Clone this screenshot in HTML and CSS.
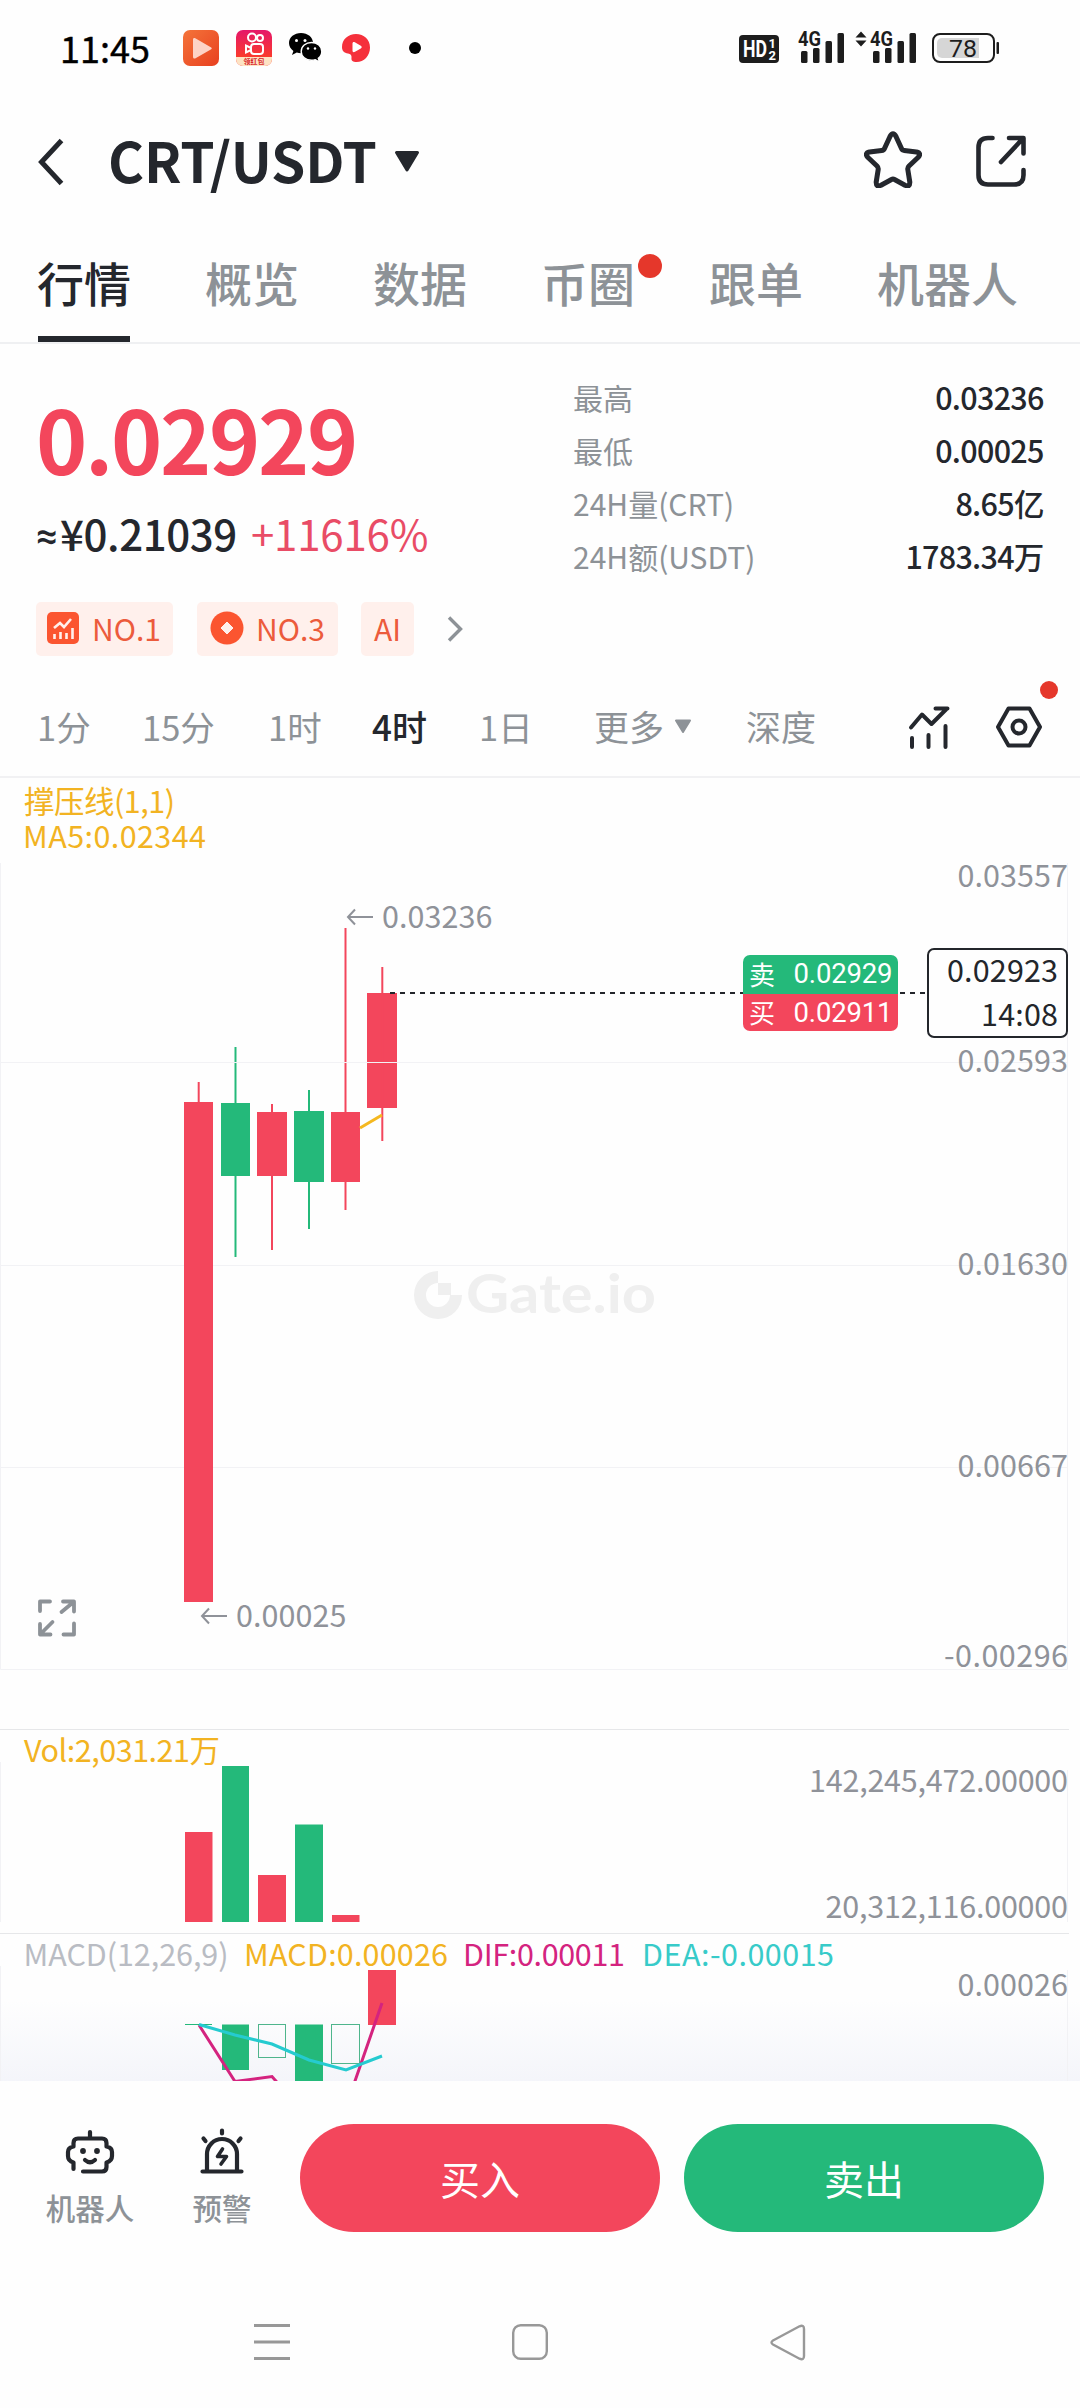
FILE: index.html
```html
<!DOCTYPE html>
<html lang="zh-CN">
<head>
<meta charset="utf-8">
<title>CRT/USDT</title>
<link rel="stylesheet" href="styles.css">
</head>
<body>
<div class="screen">

  <div class="status">
    <span class="clock">11:45</span>
    <div class="notices">
      <svg width="36" height="36" viewBox="0 0 36 36">
        <defs><linearGradient id="gPlay" x1="0" y1="0" x2="1" y2="1"><stop offset="0" stop-color="#f4743a"/><stop offset="1" stop-color="#e8401f"/></linearGradient></defs>
        <rect width="36" height="36" rx="7" fill="url(#gPlay)"/>
        <path d="M10 9.500c0-1.500 1-2 2.300-1.300l15.500 9c1.300.8 1.300 1.500 0 2.200L13 28c-1.800 1-3 .6-3-1.500z" fill="#fdd3c6"/>
      </svg>
      <svg width="36" height="36" viewBox="0 0 36 36">
        <defs><linearGradient id="gCam" x1="0" y1="0" x2="0" y2="1"><stop offset="0" stop-color="#e5176a"/><stop offset=".75" stop-color="#fa3a2c"/></linearGradient></defs>
        <rect width="36" height="36" rx="7" fill="url(#gCam)"/>
        <g fill="none" stroke="#fff" stroke-width="2"><circle cx="16" cy="7.500" r="4"/><circle cx="24" cy="8" r="3"/><rect x="15" y="14" width="12" height="10" rx="3"/><path d="M15 18l-5-2.500v7l5-2.500"/></g>
        <path d="M0 27h36v2a7 7 0 0 1-7 7H7a7 7 0 0 1-7-7z" fill="#fde3c4"/>
        <text class="tiny-label" x="18" y="34" text-anchor="middle">领红包</text>
      </svg>
      <svg width="34" height="30" viewBox="0 0 34 30">
        <path d="M12 0C5.300 0 0 4.300 0 10c0 3.200 1.700 6 4.400 7.900L3 22l4.800-2.400c1.400.4 2.800.6 4.200.6C18.700 20.200 24 15.700 24 10S18.700 0 12 0z" fill="#000"/>
        <path d="M22.500 9.500c-5.800 0-10.300 3.900-10.300 8.900s4.500 8.900 10.300 8.900c1.300 0 2.600-.2 3.800-.6L30.500 29l-1.200-3.800c2.200-1.600 3.500-4 3.500-6.800 0-5-4.500-8.900-10.300-8.900z" fill="#000" stroke="#fff" stroke-width="1.400"/>
        <g fill="#fff"><circle cx="7.500" cy="7.500" r="1.500"/><circle cx="16" cy="7.500" r="1.500"/><circle cx="19" cy="15.500" r="1.200"/><circle cx="26" cy="15.500" r="1.200"/></g>
      </svg>
      <svg class="notice-red" width="30" height="30" viewBox="0 0 30 30">
        <path d="M15 1c8 0 14 5.500 14 13.500C29 23 23 29 15.500 29 12 29 10 28 10.500 24.500c.3-2.500-1-3.500-3.500-4C3 19.800 1 18 1 14 1 6.500 7 1 15 1z" fill="#f5303b"/>
        <path d="M11.500 10.500c0-1.500 1-2 2.300-1.300l6 3.600c1.300.8 1.300 1.900 0 2.600l-5.800 3.400c-1.500.8-2.500.3-2.500-1.300z" fill="#fff"/>
      </svg>
      <svg class="notice-dot" width="12" height="12"><circle cx="6" cy="6" r="6"/></svg>
    </div>
    <svg class="signals" width="262" height="48" viewBox="738 24 262 48">
      <rect x="739" y="35" width="40" height="28" rx="4" fill="#1d1d1d"/>
      <text class="hd" x="743" y="57" textLength="24" lengthAdjust="spacingAndGlyphs">HD</text>
      <text class="hd-num" x="768.500" y="48">1</text><text class="hd-num" x="768.500" y="60">2</text>
      <g fill="#1d1d1d">
        <text class="net" x="798" y="46" textLength="23" lengthAdjust="spacingAndGlyphs">4G</text>
        <rect x="801" y="51" width="6.500" height="12" rx="1.500"/><rect x="813" y="48" width="6.500" height="15" rx="1.500"/><rect x="825.500" y="41" width="6.500" height="22" rx="1.500"/><rect x="837.500" y="33" width="6.500" height="30" rx="1.500"/>
        <path d="M861 31.500l5.500 6h-11zM861 46.500l5.500-6h-11z"/>
        <text class="net" x="870" y="46" textLength="23" lengthAdjust="spacingAndGlyphs">4G</text>
        <rect x="873" y="51" width="6.500" height="12" rx="1.500"/><rect x="885" y="48" width="6.500" height="15" rx="1.500"/><rect x="897.500" y="41" width="6.500" height="22" rx="1.500"/><rect x="909.500" y="33" width="6.500" height="30" rx="1.500"/>
        <rect x="996.500" y="42" width="2.500" height="12" rx="1"/>
      </g>
      <rect x="933" y="34" width="61" height="28" rx="7" fill="none" stroke="#1d1d1d" stroke-width="2"/>
      <path d="M942 38h37v20h-37a5 5 0 0 1-5-5V43a5 5 0 0 1 5-5z" fill="#d6d6d6"/>
      <text class="batt" x="949" y="57" textLength="28" lengthAdjust="spacingAndGlyphs">78</text>
    </svg>
  </div>

  <header class="header">
    <svg class="back" width="28" height="48" viewBox="0 0 28 48"><path d="M24.500 2.500L4.500 24l20 21.500" fill="none" stroke="#24272d" stroke-width="5"/></svg>
    <h1 class="pair">CRT/USDT</h1>
    <svg class="caret" width="26" height="22" viewBox="0 0 26 22"><path d="M2.500 1.500h21L13 19z" fill="#24272d" stroke="#24272d" stroke-width="3" stroke-linejoin="round"/></svg>
    <svg class="star" width="58" height="58" viewBox="0 0 58 58"><path d="M26 6.500q3-5.500 6 0l5.500 12q.8 1.800 2.800 2l12.200 1.500q5.500 1.200 1.500 5.500l-9 8.500q-1.500 1.500-1.200 3.500l2 12.500q.2 5.500-4.800 3.200L30.500 49.500q-1.500-.8-3 0L17 55.200q-5 2.300-4.800-3.200l2-12.500q.3-2-1.200-3.500l-9-8.500Q0 23.200 5.500 22l12.200-1.500q2-.2 2.800-2z" fill="none" stroke="#24272d" stroke-width="5" stroke-linejoin="round"/></svg>
    <svg class="share" width="52" height="54" viewBox="0 0 52 54"><g fill="none" stroke="#24272d" stroke-width="4.600" stroke-linecap="round" stroke-linejoin="round"><path d="M17.500 4H13Q3.500 4 3.500 13.500V41Q3.500 50.500 13 50.500H39Q48.500 50.500 48.500 41V36"/><path d="M34 4H48.500V19.500M48 4.500L26 28"/></g></svg>
  </header>

  <nav class="tabs">
    <span class="tab tab-on">行情</span>
    <span class="tab">概览</span>
    <span class="tab">数据</span>
    <span class="tab">币圈<i class="dot"></i></span>
    <span class="tab">跟单</span>
    <span class="tab">机器人</span>
  </nav>

  <section class="quote">
    <div class="price-col">
      <div class="price">0.02929</div>
      <div class="sub"><span class="approx">≈</span><span class="cny">¥0.21039</span><span class="change">+11616%</span></div>
      <div class="tags">
        <span class="tag tag-a"><svg width="32" height="32" viewBox="0 0 32 32"><rect width="32" height="32" rx="5" fill="#fb5530"/><path d="M7 16l6-5 4 4 7-8M7.500 27v-5M13.500 27v-7M19.500 27v-6M25.500 27V16" fill="none" stroke="#fff0ec" stroke-width="2.600"/></svg>NO.1</span>
        <span class="tag tag-b"><svg width="34" height="34" viewBox="0 0 34 34"><circle cx="17" cy="17" r="16.500" fill="#fb5530"/><path d="M17 11l6 6-6 6-6-6z" fill="#fff0ec" stroke="#fff0ec" stroke-linejoin="round"/></svg>NO.3</span>
        <span class="tag tag-c">AI</span>
        <svg class="more-tags" width="16" height="26" viewBox="0 0 16 26"><path d="M2 1.500L13.500 13 2 24.500" fill="none" stroke="#8d9297" stroke-width="3.400"/></svg>
      </div>
    </div>
    <dl class="stats">
      <div><dt>最高</dt><dd>0.03236</dd></div>
      <div><dt>最低</dt><dd>0.00025</dd></div>
      <div><dt>24H量(CRT)</dt><dd>8.65亿</dd></div>
      <div><dt>24H额(USDT)</dt><dd>1783.34万</dd></div>
    </dl>
  </section>

  <div class="intervals">
    <span class="iv iv-1">1分</span>
    <span class="iv iv-2">15分</span>
    <span class="iv iv-3">1时</span>
    <span class="iv iv-4">4时</span>
    <span class="iv iv-5">1日</span>
    <span class="iv iv-6">更多<svg width="18" height="15" viewBox="0 0 18 15"><path d="M2 1.500h14L9 13z" fill="#8d9297" stroke="#8d9297" stroke-width="2" stroke-linejoin="round"/></svg></span>
    <span class="iv iv-7">深度</span>
    <svg class="ind" width="44" height="44" viewBox="0 0 44 44"><g fill="none" stroke="#24272d" stroke-width="4" stroke-linecap="round" stroke-linejoin="round"><path d="M4 22.500L15 9.500 24.500 19 39.500 4M28.500 3.500H40.500M5 33v9M21.500 30v12M38.500 21v21"/></g></svg>
    <span class="settings"><svg width="46" height="42" viewBox="0 0 46 42"><g fill="none" stroke="#24272d" stroke-width="4" stroke-linejoin="round"><path d="M12.500 2.500h21L44 21 33.500 39.500h-21L2 21z"/><circle cx="23" cy="21" r="6.500"/></g></svg><i class="dot dot-s"></i></span>
  </div>

  <svg class="chart" width="1080" height="1303" viewBox="0 778 1080 1303">
    <defs><linearGradient id="fade" x1="0" y1="0" x2="0" y2="1"><stop offset="0" stop-color="#f4f5fa" stop-opacity="0"/><stop offset="1" stop-color="#f4f5fa"/></linearGradient></defs>
    <rect x="0" y="2000" width="1080" height="81" fill="url(#fade)"/>

    <g class="mark" fill="#efefef">
      <path d="M438 1271a24 24 0 1 0 24 24H450a12 12 0 1 1-12-12z"/><rect x="438" y="1283" width="13" height="12"/>
      <text x="466" y="1313" textLength="190" lengthAdjust="spacingAndGlyphs">Gate.io</text>
    </g>

    <g class="t yellow">
      <text x="24" y="813" textLength="151">撑压线(1,1)</text>
      <text x="23" y="848" textLength="183">MA5:0.02344</text>
    </g>

    <path class="grid" d="M0 1265.500H1067M0 1467.500H1067"/>
    <g fill="#f3465c">
      <rect x="184" y="1102" width="29" height="500"/><rect x="257" y="1112" width="30" height="64"/><rect x="331" y="1112" width="29" height="70"/><rect x="367" y="993" width="30" height="115"/>
      <rect x="197.700" y="1082" width="2" height="22"/><rect x="271" y="1104" width="2" height="146"/><rect x="344.500" y="928" width="2" height="282"/><rect x="381.300" y="967" width="2" height="174"/>
    </g>
    <g fill="#24b97a">
      <rect x="221" y="1103" width="29" height="73"/><rect x="294" y="1111" width="30" height="71"/>
      <rect x="234.500" y="1047" width="2" height="210"/><rect x="308" y="1090" width="2" height="139"/>
    </g>
    <path d="M360 1128L382 1115" stroke="#f5b81f" stroke-width="3" fill="none"/>
    <g class="grid">
      <path d="M.5 863V1669.500H1067.500V863M0 1062.500H1067"/>
      <path d="M.5 1762V1922M1067.500 1770V1922M.5 1966V2081M1067.500 1970V2081"/>
    </g>
    <path class="rule" d="M0 1729.500H1069M0 1933.500H1069"/>
    <path d="M390 993H743M900 993H927" stroke="#23262b" stroke-width="2" stroke-dasharray="5 5"/>

    <g class="t grey">
      <path class="arrow" d="M373 917H348M355 909.500L348 917l7 7.500M227 1616H202M209 1608.500L202 1616l7 7.500"/>
      <text x="382" y="928" textLength="110.500">0.03236</text>
      <text x="236" y="1627" textLength="110.500">0.00025</text>
    </g>
    <g class="t grey end">
      <text x="1068" y="886.500" textLength="110.500">0.03557</text>
      <text x="1068" y="1071.500" textLength="110.500">0.02593</text>
      <text x="1068" y="1274.500" textLength="110.500">0.01630</text>
      <text x="1068" y="1476.500" textLength="110.500">0.00667</text>
      <text x="1068" y="1666.500" textLength="124">-0.00296</text>
      <text x="1068" y="1792" textLength="259">142,245,472.00000</text>
      <text x="1068" y="1918" textLength="242.500">20,312,116.00000</text>
      <text x="1068" y="1996" textLength="110.500">0.00026</text>
    </g>

    <path d="M750 955H891a7 7 0 0 1 7 7V994H743V962a7 7 0 0 1 7-7z" fill="#24b97a"/>
    <path d="M743 994H898V1024a7 7 0 0 1-7 7H750a7 7 0 0 1-7-7z" fill="#f3465c"/>
    <g class="bid"><text class="cjk" x="749" y="985">卖</text><text x="793.500" y="982.500" textLength="99">0.02929</text><text class="cjk" x="749" y="1023">买</text><text x="793.500" y="1021.500" textLength="99">0.02911</text></g>
    <rect x="928" y="949" width="139" height="88" rx="6" fill="#fefefe" stroke="#23262b" stroke-width="2"/>
    <g class="t dark end"><text x="1058" y="981.500" textLength="111">0.02923</text><text x="1058" y="1025.500" textLength="77">14:08</text></g>

    <g fill="none" stroke="#8d9297" stroke-width="3.800" stroke-linecap="round" stroke-linejoin="round"><path d="M50 1601.500H40V1611M63 1601.500H74V1611.500M73 1602.500L61.500 1612M40 1624V1634.500H50.500M41 1633.500L52.500 1622M74 1623.500V1634.500H63.500"/></g>

    <text class="t yellow" x="24" y="1762" textLength="196">Vol:2,031.21万</text>
    <g fill="#f3465c"><rect x="185" y="1832" width="27.500" height="90"/><rect x="258" y="1875" width="28" height="47"/><rect x="332" y="1915" width="27.500" height="7"/></g>
    <g fill="#24b97a"><rect x="222" y="1766" width="27" height="156"/><rect x="295" y="1824.500" width="28" height="97.500"/></g>

    <g class="t">
      <text class="pale" x="23.500" y="1966" textLength="205">MACD(12,26,9)</text>
      <text class="yellow" x="244" y="1966" textLength="204">MACD:0.00026</text>
      <text class="magenta" x="463" y="1966" textLength="162">DIF:0.00011</text>
      <text class="cyan" x="642" y="1966" textLength="192">DEA:-0.00015</text>
    </g>
    <rect x="368" y="1970" width="28" height="55" fill="#f3465c"/>
    <g fill="#24b97a"><rect x="185" y="2024" width="27" height="1"/><rect x="222" y="2024.500" width="27" height="45.500"/><rect x="295" y="2024.500" width="28" height="57"/></g>
    <g fill="none" stroke="#4fb58c"><rect x="258.500" y="2024.500" width="27" height="33"/><rect x="331.500" y="2024.500" width="28" height="39"/></g>
    <g fill="none" stroke-width="3">
      <path d="M199 2025L235 2081.500 272 2076.500 309 2119 346 2107 382 2003" stroke="#d4237f"/>
      <path d="M199 2024.500L235 2035 272 2044 309 2060 346 2070 382 2056" stroke="#25cbd0"/>
    </g>
  </svg>

  <footer class="actions">
    <div class="act">
      <svg width="50" height="46" viewBox="0 0 50 46"><g fill="none" stroke="#24272d" stroke-width="4.200" stroke-linecap="round" stroke-linejoin="round"><path d="M25 3v5M8.500 40V33.500Q3 32 3 27V23Q3 18.500 8.500 17.500V14Q8.500 9.500 13 9.500H37Q41.500 9.500 41.500 14V17.500Q47 18.500 47 23V27Q47 32 41.500 33.500V38Q41.500 42.500 37 42.500H18M20 31Q25 35.500 30 31"/></g><circle cx="18" cy="22" r="2.900" fill="#24272d"/><circle cx="32" cy="22" r="2.900" fill="#24272d"/></svg>
      <span>机器人</span>
    </div>
    <div class="act act-2">
      <svg width="46" height="46" viewBox="0 0 46 46"><g fill="none" stroke="#24272d" stroke-width="4.200" stroke-linecap="round" stroke-linejoin="round"><path d="M3.500 43.500H42.500M8 43V26A15 15 0 0 1 38 26V43M23 2.500V5.500M4.500 10.500L6.500 13M41.500 10.500L39.500 13"/><path d="M23.500 21L18.500 28.500H27.500L22 36" stroke-width="3.600"/></g></svg>
      <span>预警</span>
    </div>
    <button class="btn buy">买入</button>
    <button class="btn sell">卖出</button>
  </footer>

  <div class="sysnav">
    <svg width="36" height="38" viewBox="0 0 36 38"><path d="M0 2.500H36M0 19H36M0 35.500H36" stroke="#989898" stroke-width="3"/></svg>
    <svg width="36" height="36" viewBox="0 0 36 36"><rect x="1.200" y="1.200" width="33.600" height="33.600" rx="7.500" fill="none" stroke="#989898" stroke-width="2.400"/></svg>
    <svg width="36" height="37" viewBox="0 0 36 37"><path d="M3 16.500L29.500 2.300Q34 .5 34 5V32Q34 36.500 29.500 34.700L3 20.500Q0 18.500 3 16.500z" fill="none" stroke="#989898" stroke-width="2.400"/></svg>
  </div>
</div>
</body>
</html>
```
FILE: styles.css
```css
* { box-sizing: border-box; margin: 0; padding: 0; }
body {
  width: 1080px;
  background: #fefefe;
  color: #24272d;
  font-family: "Noto Sans CJK SC", "Noto Sans", sans-serif;
}
svg { display: block; flex: none; overflow: hidden; }
.screen { width: 1080px; height: 2408px; display: flex; flex-direction: column; overflow: hidden; }

/* status bar */
.status { height: 97px; padding: 0 80px 0 60px; display: flex; align-items: center; }
.clock { width: 123px; font-size: 36px; line-height: 52px; padding-bottom: 3px; color: #000; font-weight: 400; -webkit-text-stroke: 0.4px #000; }
.notices { display: flex; align-items: center; gap: 17px; flex: 1; }
.notice-red { margin-left: 1px; }
.notice-dot { margin-left: 21px; }
.tiny-label { font-size: 7px; font-weight: 700; fill: #d8262a; }
.hd { font: 700 24px Roboto, sans-serif; fill: #fff; }
.hd-num { font: 700 13px/1 Roboto, sans-serif; fill: #fff; }
.net { font: 700 20px Roboto, sans-serif; }
.batt { font: 400 24px Roboto, sans-serif; fill: #1d1d1d; }

/* title row */
.header { height: 130px; padding: 0 52px 0 37px; display: flex; align-items: center; }
.pair { width: 284px; margin-left: 43px; font-size: 55px; line-height: 80px; font-weight: 700; padding-bottom: 5px; white-space: nowrap; letter-spacing: -0.2px; }
.caret { margin-left: 2px; }
.star { margin-left: 444px; margin-top: -6px; }
.share { margin-left: 53px; margin-top: -2px; }

/* section tabs */
.tabs { height: 117px; padding-left: 37px; display: flex; gap: 74px; border-bottom: 2px solid #eff0f2; }
.tab { position: relative; padding-top: 20px; font-size: 47px; line-height: 70px; font-weight: 500; color: #8d9297; display: flex; flex-direction: column; white-space: nowrap; }
.tab-on { color: #24272d; }
.tab-on::after { content: ""; width: 92px; height: 6px; margin: auto auto 0; background: #24272d; }
.dot { position: absolute; left: 97px; top: 27px; width: 24px; height: 24px; border-radius: 50%; background: #e5372b; }

/* quote */
.quote { height: 322px; padding: 0 37px 0 36px; display: flex; justify-content: space-between; }
.price-col { padding-top: 41px; }
.price { font-size: 87px; line-height: 104px; font-weight: 700; color: #f3465c; letter-spacing: -2.3px; }
.sub { margin-top: 14px; height: 62px; font-size: 42px; line-height: 60px; font-weight: 500; display: flex; }
.approx { width: 24px; font-family: Roboto, sans-serif; font-size: 38px; line-height: 66px; }
.cny { width: 191px; letter-spacing: -0.4px; }
.change { color: #e94c66; font-weight: 400; letter-spacing: -0.2px; }
.tags { margin-top: 37px; display: flex; align-items: center; }
.tag { height: 54px; display: flex; align-items: center; background: #fff0ec; border-radius: 5px; color: #ec5b3c; font-size: 30px; line-height: 50px; padding-bottom: 1px; }
.tag-a { width: 137px; padding-left: 11px; gap: 13px; }
.tag-b { width: 141px; margin-left: 24px; padding-left: 13px; gap: 12px; }
.tag-c { width: 53px; margin-left: 23px; justify-content: center; }
.more-tags { margin-left: 33px; }
.stats { width: 470px; padding-top: 27px; }
.stats div { height: 53px; display: flex; justify-content: space-between; font-size: 30px; line-height: 53px; }
.stats dt { color: #8d9297; }
.stats dd { font-size: 30.500px; font-weight: 500; letter-spacing: -0.7px; margin-right: -0.7px; }

/* intervals */
.intervals { height: 113px; border-bottom: 2px solid #f1f1f3; display: flex; align-items: center; padding: 12px 37px 0; }
.iv { font-size: 34.500px; line-height: 50px; padding-bottom: 1px; color: #8d9297; display: flex; align-items: center; white-space: nowrap; }
.iv-1 { width: 105px; }
.iv-2 { width: 126px; }
.iv-3 { width: 104px; }
.iv-4 { width: 107px; color: #24272d; font-weight: 500; font-size: 35px; }
.iv-5 { width: 115px; }
.iv-6 { width: 152px; gap: 10px; font-size: 35px; }
.iv-7 { width: 161px; font-size: 35px; }
.settings { position: relative; margin-left: 45px; }
.dot-s { left: 44px; top: -25px; width: 18px; height: 18px; }

/* chart */
.t { font-size: 30.500px; fill: #8d9297; }
.end { text-anchor: end; }
.yellow { fill: #f2b322; }
.grey { fill: #8f9299; }
.dark { fill: #23262b; }
.pale { fill: #b9bcc3; }
.magenta { fill: #d4237f; }
.cyan { fill: #38cbc9; }
.arrow { fill: none; stroke: #8f9299; stroke-width: 2; }
.grid { fill: none; stroke: #f2f2f5; stroke-width: 1; }
.rule { fill: none; stroke: #e6e7e9; stroke-width: 1; }
.bid { font-family: Roboto, sans-serif; font-size: 27.500px; fill: #fff; }
.cjk { font-family: "Noto Sans CJK SC", sans-serif; font-size: 26px; }
.mark text { font-family: Lato, sans-serif; font-weight: 700; font-size: 53px; }

/* bottom actions */
.actions { height: 195px; padding: 43px 36px 0 0; display: flex; align-items: flex-start; }
.act { width: 180px; padding-top: 5px; display: flex; flex-direction: column; align-items: center; }
.act span { margin-top: 14px; font-size: 29.500px; line-height: 36px; color: #8d9297; font-weight: 500; }
.act-2 { width: 84px; padding-top: 4px; }
.act-2 span { margin-top: 15px; }
.btn { width: 360px; height: 108px; border: 0; border-radius: 54px; color: #fff; font: 400 40px/108px "Noto Sans CJK SC", sans-serif; }
.buy { margin-left: 36px; background: #f3465c; }
.sell { margin-left: 24px; background: #24b97a; }

/* system navigation */
.sysnav { height: 132px; padding-left: 254px; display: flex; align-items: center; gap: 222px; }
```
